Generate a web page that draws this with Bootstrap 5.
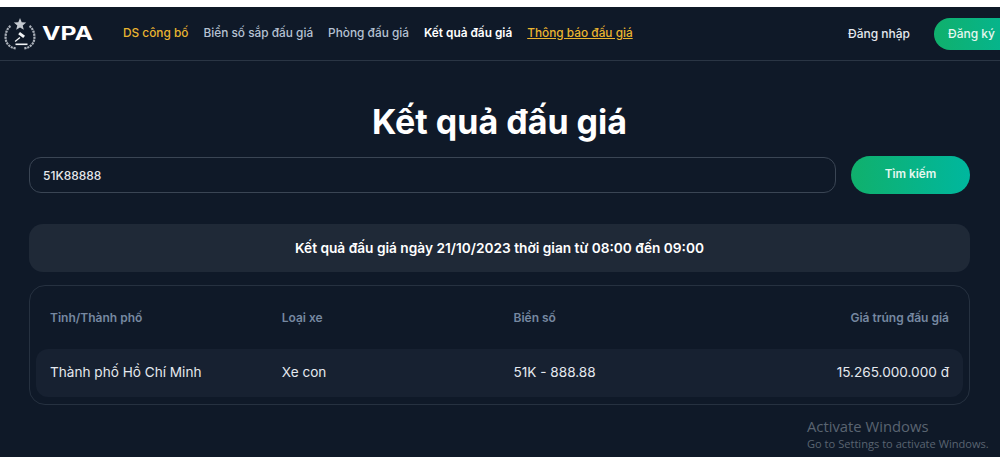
<!DOCTYPE html>
<html lang="vi">
<head>
    <meta charset="UTF-8">
    <meta name="viewport" content="width=device-width, initial-scale=1.0">
    <title>VPA - Kết quả đấu giá</title>
    <link rel="stylesheet" href="https://cdn.jsdelivr.net/npm/bootstrap@5.3.0/dist/css/bootstrap.min.css">
    <style>
        html, body {
            height: 100%;
            overflow: hidden;
        }
        body {
            background: #0f1928;
            color: #fff;
            font-family: Inter, "Noto Sans", sans-serif;
            padding-top: 7px;
            position: relative;
        }
        body::before {
            content: "";
            position: absolute;
            top: 0;
            left: 0;
            right: 0;
            height: 7px;
            background: #fff;
        }
        .top-bar {
            height: 54px;
            width: 1040px;
            border-bottom: 1px solid #2a3544;
            padding: 0 0 0 4px;
        }
        .brand-text {
            font-size: 19px;
            font-weight: 700;
            color: #fff;
            line-height: 1;
            transform: scaleX(1.3);
            transform-origin: left center;
            margin-left: 6px;
            width: 65px;
        }
        .menu-link {
            font-size: 11.85px;
            font-weight: 500;
            color: #b6c2d3;
            text-decoration: none;
            margin-right: 15px;
            white-space: nowrap;
        }
        .menu-gold { color: #eab530; }
        .menu-active { color: #fff; font-weight: 600; }
        .menu-notice { color: #eab530; text-decoration: underline; }
        .login-link {
            font-size: 12px;
            font-weight: 500;
            color: #e5e9ef;
            text-decoration: none;
            margin-right: 24px;
        }
        .signup-btn {
            width: 106px;
            height: 32px;
            border-radius: 16px;
            background: linear-gradient(90deg, #10b06c, #00b79e);
            color: #e6f7f0;
            font-size: 12px;
            font-weight: 500;
            text-decoration: none;
            padding: 7px 0 0 14px;
            margin-top: 1px;
        }
        .page-title {
            font-size: 34px;
            font-weight: 700;
            line-height: 44px;
            margin: 39px 0 0;
            text-align: center;
        }
        .page-wrap {
            padding: 0 30px 0 29px;
        }
        .search-row {
            margin-top: 12px;
            gap: 15px;
        }
        .search-input, .search-input:focus {
            height: 36px;
            margin: 1px 0;
            background: transparent;
            border: 1px solid #3a4554;
            border-radius: 12px;
            color: #e5e7eb;
            font-size: 12px;
            font-weight: 500;
            padding: 0 13px;
            box-shadow: none;
        }
        .search-btn {
            flex: 0 0 119px;
            height: 38px;
            border: 0;
            border-radius: 19px;
            background: linear-gradient(90deg, #10b06c, #00b79e);
            color: #e6f7f0;
            font-size: 11.7px;
            font-weight: 600;
            padding: 0;
        }
        .result-bar {
            margin-top: 30px;
            height: 48px;
            background: #1f2937;
            border-radius: 14px;
            font-size: 13.7px;
            font-weight: 600;
        }
        .result-box {
            margin-top: 13px;
            height: 120px;
            border: 1px solid #263140;
            border-radius: 16px;
            padding: 6px;
        }
        .result-table {
            --bs-table-bg: transparent;
            --bs-table-color: #fff;
            table-layout: fixed;
            margin: 0;
            border-collapse: separate;
            border-spacing: 0;
        }
        .result-table th, .result-table td {
            border: 0;
            padding: 0 14px;
            vertical-align: middle;
        }
        .result-table th {
            height: 57px;
            font-size: 12px;
            font-weight: 600;
            color: #7688a1;
            padding-bottom: 6px;
        }
        .result-table td {
            height: 48px;
            font-size: 13.6px;
            font-weight: 400;
            color: #e5e9ef;
            background: #172131;
            padding-bottom: 2px;
        }
        .result-table td:first-child { border-radius: 12px 0 0 12px; }
        .result-table td:last-child { border-radius: 0 12px 12px 0; }
        .activate-note {
            position: absolute;
            left: 807px;
            top: 417px;
            color: #5a6471;
            font-family: "Open Sans", "Noto Sans", sans-serif;
            pointer-events: none;
            white-space: nowrap;
        }
        .activate-note b {
            display: block;
            font-weight: 400;
            font-size: 14.8px;
            line-height: 19px;
        }
        .activate-note span {
            display: block;
            font-size: 11.1px;
            line-height: 16px;
        }
    </style>
</head>
<body>

    <!-- Header -->
    <header class="top-bar d-flex align-items-center">
        <svg width="32" height="33" viewBox="0 0 32 33" fill="none" aria-label="VPA logo">
            <!-- star -->
            <path d="M16 1l1.700 4.200 4.500.3-3.500 2.900 1.100 4.400-3.800-2.400-3.800 2.400 1.100-4.400-3.500-2.900 4.500-.3z" fill="#c4c9d0"/>
            <!-- wreath -->
            <path d="M6.500 9C1 13 0 23 4 27.500c2.500 2.800 5 3.500 8.500 4" stroke="#aab0b9" stroke-width="2.200" stroke-dasharray="2.200 .8"/>
            <path d="M25.500 9c5.500 4 6.500 14 2.500 18.500-2.500 2.800-5 3.500-8.500 4" stroke="#aab0b9" stroke-width="2.200" stroke-dasharray="2.200 .8"/>
            <!-- gavel -->
            <path d="M16 15l5 3.800-1.800 2.300-5-3.800z" fill="#f2f4f6"/>
            <path d="M15.500 20l-4.800 4 .8 1 4.800-4z" fill="#f2f4f6"/>
            <path d="M11.500 26.500h12v1.600h-12z" fill="#f2f4f6"/>
        </svg>
        <span class="brand-text">VPA</span>
        <nav class="d-flex align-items-center ms-3">
            <a class="menu-link menu-gold" href="#">DS công bố</a>
            <a class="menu-link" href="#">Biển số sắp đấu giá</a>
            <a class="menu-link" href="#">Phòng đấu giá</a>
            <a class="menu-link menu-active" href="#">Kết quả đấu giá</a>
            <a class="menu-link menu-notice" href="#">Thông báo đấu giá</a>
        </nav>
        <div class="d-flex align-items-center ms-auto">
            <a class="login-link" href="#">Đăng nhập</a>
            <a class="signup-btn" href="#">Đăng ký</a>
        </div>
    </header>

    <main class="page-wrap">
        <h1 class="page-title">Kết quả đấu giá</h1>

        <form class="search-row d-flex">
            <input type="text" class="form-control search-input" value="51K88888">
            <button type="button" class="btn search-btn">Tìm kiếm</button>
        </form>

        <div class="result-bar d-flex align-items-center justify-content-center">
            Kết quả đấu giá ngày 21/10/2023 thời gian từ 08:00 đến 09:00
        </div>

        <div class="result-box">
            <table class="table result-table">
                <thead>
                    <tr>
                        <th>Tỉnh/Thành phố</th>
                        <th>Loại xe</th>
                        <th>Biển số</th>
                        <th class="text-end">Giá trúng đấu giá</th>
                    </tr>
                </thead>
                <tbody>
                    <tr>
                        <td>Thành phố Hồ Chí Minh</td>
                        <td>Xe con</td>
                        <td>51K - 888.88</td>
                        <td class="text-end">15.265.000.000 đ</td>
                    </tr>
                </tbody>
            </table>
        </div>
    </main>

    <div class="activate-note">
        <b>Activate Windows</b>
        <span>Go to Settings to activate Windows.</span>
    </div>

    <script src="https://cdn.jsdelivr.net/npm/bootstrap@5.3.0/dist/js/bootstrap.bundle.min.js"></script>
</body>
</html>
